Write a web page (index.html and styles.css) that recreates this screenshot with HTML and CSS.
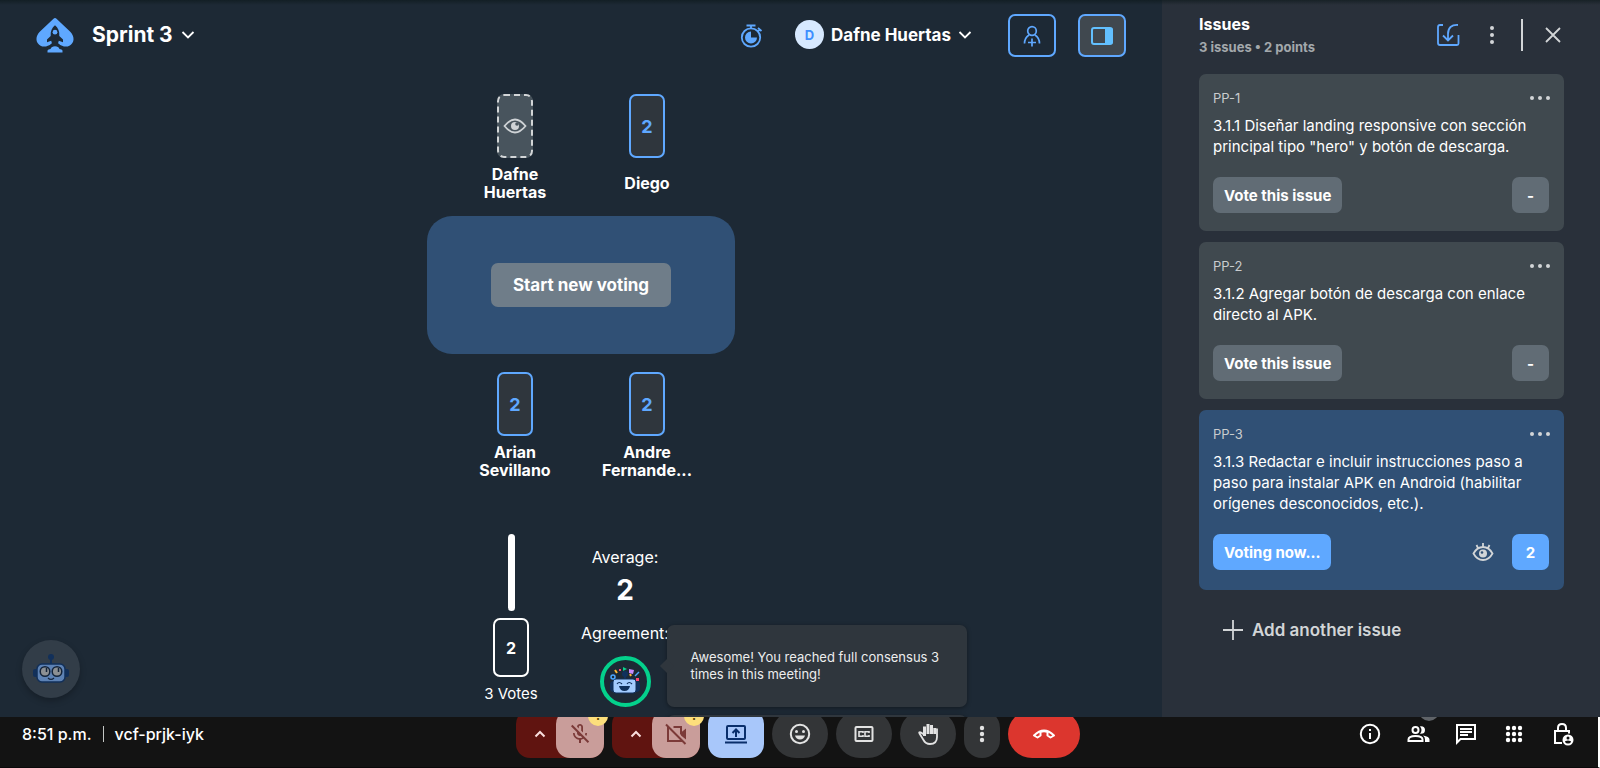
FILE: index.html
```
<!DOCTYPE html>
<html lang="en">
<head>
<meta charset="utf-8">
<meta name="viewport" content="width=device-width, initial-scale=1">
<title>Sprint 3</title>
<link rel="stylesheet" href="styles.css">
</head>
<body>
<div class="shell">
  <div class="app">
    <main class="board">
      <header class="topbar">
        <a class="logo" href="#" aria-label="Home">
          <svg width="38" height="36" viewBox="0 0 38 36"><path fill="#5fa8ff" d="M17.500.8Q19-.6 20.500.8L34 13.500C38 17.500 38.500 22 36 25.500 33.500 29.500 27 29.800 22.500 25.500H15.500C11 29.800 4.500 29.500 2 25.500-.5 22 0 17.500 4 13.500Z"/><path fill="#1d2935" d="M19 7.200C22 9.500 23.700 13 23.300 18L27 21.500V24.300L22.800 22.800 22 25.500 24.500 28.500H13.500L16 25.500 15.200 22.800 11 24.300V21.500L14.700 18C14.300 13 16 9.500 19 7.200Z"/><circle cx="19" cy="14.200" r="2.400" fill="#5fa8ff"/><path fill="#5fa8ff" d="M11.500 34.500V32.500Q12 31 14.500 31 15.500 28.300 19 28.300T23.500 31Q26 31 26.500 32.500V34.500Z"/></svg>
        </a>
        <button class="menu menu-title" type="button">Sprint 3
          <svg width="14" height="10" viewBox="0 0 14 10" class="line"><path d="M1.500 2 7 7.500 12.500 2"/></svg>
        </button>
        <div class="top-actions">
          <button class="icon-btn timer" type="button" aria-label="Timer">
            <svg width="24" height="24" viewBox="0 0 24 24" fill="none" stroke="#5fa8ff" stroke-width="1.800"><circle cx="12" cy="13.500" r="9.200"/><path d="M7.500 1.500h9M12 1.500V5M19 4l3.500 3M21 5.300l-2 2"/><path fill="#5fa8ff" stroke="none" d="M12 7.500a6 6 0 1 0 6 6h-6z"/></svg>
          </button>
          <button class="menu menu-user" type="button"><span class="avatar">D</span>Dafne Huertas
            <svg width="14" height="10" viewBox="0 0 14 10" class="line"><path d="M1.500 2 7 7.500 12.500 2"/></svg>
          </button>
          <button class="square" type="button" aria-label="Invite players">
            <svg width="20" height="22" viewBox="0 0 20 22" fill="none" stroke="#5fa8ff" stroke-width="1.700"><circle cx="10" cy="6" r="4.300"/><path d="M2.500 18.500c0-4 1.500-6.500 4.500-8.500M17.500 18.500c0-4-1.500-6.500-4.500-8.500M10 13.500v8M6 17.500h8"/></svg>
          </button>
          <button class="square square-on" type="button" aria-label="Toggle issues">
            <svg width="24" height="20" viewBox="0 0 24 20"><rect x="2" y="2" width="20" height="16" rx="2" fill="none" stroke="#62c0ff" stroke-width="2"/><path fill="#62c0ff" d="M15 2h6q2 0 2 2v12q0 2-2 2h-6z"/></svg>
          </button>
        </div>
      </header>

      <section class="players" aria-label="Players">
        <div class="player"><div class="card card-watch">
          <svg width="24" height="18" viewBox="0 0 24 18" fill="none" stroke="#cfd3d6" stroke-width="1.800"><path d="M1.500 9Q12-4 22.500 9 12 22 1.500 9z"/><circle cx="12" cy="9" r="4" fill="#cfd3d6" stroke="none"/><circle cx="14" cy="7" r="1.800" fill="#48545d" stroke="none"/></svg>
        </div><div class="name">Dafne<br>Huertas</div></div>
        <div class="player"><div class="card">2</div><div class="name">Diego</div></div>
      </section>
      <div class="table"><button class="start" type="button">Start new voting</button></div>
      <section class="players players-low" aria-label="Players">
        <div class="player"><div class="card">2</div><div class="name">Arian<br>Sevillano</div></div>
        <div class="player"><div class="card">2</div><div class="name">Andre<br>Fernande...</div></div>
      </section>

      <section class="results" aria-label="Results">
        <div class="tally">
          <div class="bar"></div>
          <div class="vote">2</div>
          <div class="votes">3 Votes</div>
        </div>
        <div class="summary">
          <div>Average:</div>
          <div class="average">2</div>
          <div>Agreement:</div>
          <div class="ring">
            <svg width="34" height="32" viewBox="0 0 34 32"><rect x="2" y="15" width="30" height="11" rx="4" fill="#10315d"/><circle cx="17" cy="8" r="3" fill="#10315d"/><path d="M17 8v6" stroke="#10315d" stroke-width="2"/><rect x="5" y="13" width="23" height="14" rx="3" fill="#a3ccff" stroke="#10315d"/><path fill="none" stroke="#10315d" stroke-width="1.200" d="M9 18q2-3 5 0M19 18q2-3 5 0"/><path fill="#10315d" d="M11 20h11q-1 5-5.500 5T11 20z"/><circle cx="5" cy="11" r="2" fill="none" stroke="#4ba6ff" stroke-width="1.500"/><path d="m7 4 2 3M23 10l-1-2" stroke="#ffb935" stroke-width="2"/><path fill="#0bd08c" d="m15 1 4 2-4 2z"/><path fill="#c98bff" d="m21 3 5 1-1 4-4-1z"/><path d="m27 10 4-4" stroke="#4ba6ff" stroke-width="1.500"/><path fill="#ff4772" d="M28 12h3v3h-3zM11 3h2v2h-2z"/></svg>
            <div class="tip tip-next"></div>
            <div class="tip" role="status">Awesome! You reached full consensus 3 times in this meeting!</div>
          </div>
        </div>
      </section>

      <button class="bot" type="button" aria-label="Assistant">
        <svg width="36" height="30" viewBox="0 0 36 30"><rect x="0" y="15" width="36" height="8" rx="2" fill="#12305a"/><circle cx="18" cy="3" r="3" fill="#12305a"/><path d="M18 3v8" stroke="#12305a" stroke-width="2"/><rect x="4" y="10" width="28" height="18" rx="5" fill="#5d82b4" stroke="#12305a" stroke-width="1.500"/><g fill="#8c9093" stroke="#14243a" stroke-width="1.500"><circle cx="12" cy="17.500" r="4.800"/><circle cx="24" cy="17.500" r="4.800"/></g><path d="M13.500 14v4M25.500 14v4" stroke="#14243a" stroke-width="1.500"/><path fill="none" stroke="#14243a" stroke-width="1.200" d="M15 24q3 3 6 0"/></svg>
      </button>
    </main>

    <aside class="issues">
      <header class="issues-head">
        <div><h2 class="issues-title">Issues</h2><p class="issues-sub">3 issues • 2 points</p></div>
        <div class="issues-tools">
          <button class="icon-btn" type="button" aria-label="Import">
            <svg width="24" height="24" viewBox="0 0 24 24" fill="none" stroke="#5fa8ff" stroke-width="1.800"><path d="M7 2H4Q2 2 2 4v16q0 2 2 2h17q1.500 0 1.500-1.500V12"/><path d="M22 2q-10-.5-10 9v6M7 12.500l5 5 5-5"/></svg>
          </button>
          <button class="icon-btn more" type="button" aria-label="More">
            <svg width="6" height="20" viewBox="0 0 6 20" fill="#d2d5d7"><circle cx="3" cy="3" r="2"/><circle cx="3" cy="10" r="2"/><circle cx="3" cy="17" r="2"/></svg>
          </button>
          <span class="rule"></span>
          <button class="icon-btn" type="button" aria-label="Close">
            <svg width="16" height="16" viewBox="0 0 16 16" stroke="#d2d5d7" stroke-width="1.800"><path d="m1 1 14 14M15 1 1 15"/></svg>
          </button>
        </div>
      </header>
      <article class="issue">
        <div class="issue-row"><span class="key">PP-1</span><button class="icon-btn" type="button" aria-label="PP-1 options"><svg width="22" height="6" viewBox="0 0 22 6" fill="#d2d5d7"><circle cx="3" cy="3" r="2"/><circle cx="11" cy="3" r="2"/><circle cx="19" cy="3" r="2"/></svg></button></div>
        <p class="issue-text">3.1.1 Diseñar landing responsive con sección principal tipo "hero" y botón de descarga.</p>
        <div class="issue-foot"><button class="btn" type="button">Vote this issue</button><button class="btn points" type="button">-</button></div>
      </article>
      <article class="issue">
        <div class="issue-row"><span class="key">PP-2</span><button class="icon-btn" type="button" aria-label="PP-2 options"><svg width="22" height="6" viewBox="0 0 22 6" fill="#d2d5d7"><circle cx="3" cy="3" r="2"/><circle cx="11" cy="3" r="2"/><circle cx="19" cy="3" r="2"/></svg></button></div>
        <p class="issue-text">3.1.2 Agregar botón de descarga con enlace directo al APK.</p>
        <div class="issue-foot"><button class="btn" type="button">Vote this issue</button><button class="btn points" type="button">-</button></div>
      </article>
      <article class="issue issue-active">
        <div class="issue-row"><span class="key">PP-3</span><button class="icon-btn" type="button" aria-label="PP-3 options"><svg width="22" height="6" viewBox="0 0 22 6" fill="#d2d5d7"><circle cx="3" cy="3" r="2"/><circle cx="11" cy="3" r="2"/><circle cx="19" cy="3" r="2"/></svg></button></div>
        <p class="issue-text">3.1.3 Redactar e incluir instrucciones paso a paso para instalar APK en Android (habilitar orígenes desconocidos, etc.).</p>
        <div class="issue-foot"><button class="btn" type="button">Voting now...</button>
          <button class="icon-btn reveal" type="button" aria-label="Reveal votes"><svg width="22" height="20" viewBox="0 0 22 20" fill="none" stroke="#d2d5d7" stroke-width="1.800"><path d="M1.500 11.500Q5 5 11 5T20.500 11.500Q17 18 11 18T1.500 11.500zM11 5V1M6 6 4.500 3M16 6l1.500-3"/><circle cx="11" cy="11.500" r="4" fill="#d2d5d7" stroke="none"/><circle cx="10" cy="10.500" r="1.300" fill="#305075" stroke="none"/></svg></button>
          <button class="btn points" type="button">2</button></div>
      </article>
      <button class="add" type="button"><svg width="20" height="20" viewBox="0 0 20 20" stroke="#d2d5d7" stroke-width="1.800"><path d="M10 0v20M0 10h20"/></svg>Add another issue</button>
    </aside>
  </div>

  <footer class="call">
    <div class="meeting"><span>8:51 p.m.</span><span class="meeting-rule"></span><span>vcf-prjk-iyk</span></div>
    <div class="controls">
      <div class="split">
        <button class="caret" type="button" aria-label="Audio settings"><svg width="12" height="8" viewBox="0 0 12 8" fill="none" stroke="#f9dedc" stroke-width="2"><path d="m1.500 6.500 4.500-4.500 4.500 4.500"/></svg></button>
        <button class="muted" type="button" aria-label="Turn on microphone"><svg width="24" height="24" viewBox="0 0 24 24" fill="#7b3a38"><path d="M10.800 4.900c0-.66.54-1.200 1.200-1.200s1.200.54 1.200 1.200l-.01 3.910L15 10.600V5c0-1.660-1.340-3-3-3-1.540 0-2.790 1.160-2.960 2.650l1.760 1.760zM19 11h-1.700c0 .58-.1 1.130-.27 1.640l1.270 1.270c.44-.88.7-1.870.7-2.910M4.410 2.860 3 4.270l6 6V11c0 1.660 1.340 3 3 3 .23 0 .44-.03.65-.08l1.660 1.660c-.71.33-1.500.52-2.310.52-2.760 0-5.300-2.100-5.300-5.100H5c0 3.410 2.720 6.230 6 6.720V21h2v-3.280c.91-.13 1.770-.45 2.550-.9l4.200 4.200 1.410-1.410z"/></svg><span class="warn">!</span></button>
      </div>
      <div class="split">
        <button class="caret" type="button" aria-label="Video settings"><svg width="12" height="8" viewBox="0 0 12 8" fill="none" stroke="#f9dedc" stroke-width="2"><path d="m1.500 6.500 4.500-4.500 4.500 4.500"/></svg></button>
        <button class="muted" type="button" aria-label="Turn on camera"><svg width="24" height="24" viewBox="0 0 24 24" fill="none" stroke="#7b3a38" stroke-width="2"><path d="M4 5v14h13v-2M9.500 5H17v7.500M2 2.500l19.500 19.500"/><path fill="#7b3a38" stroke="none" d="m17 10.500 5-4v11l-5-4z"/></svg><span class="warn">!</span></button>
      </div>
      <button class="ctl ctl-present" type="button" aria-label="Present now"><svg width="24" height="24" viewBox="0 0 24 24" fill="none" stroke="#0a2f6b" stroke-width="2"><rect x="3" y="4" width="18" height="13" rx="1"/><path d="M1 20.500h22M12 15V8.500M8.500 11 12 7.500l3.500 3.500"/></svg></button>
      <button class="ctl" type="button" aria-label="Send a reaction"><svg width="24" height="24" viewBox="0 0 24 24" fill="none" stroke="#e3e3e3" stroke-width="2"><circle cx="12" cy="12" r="9.200"/><path fill="#e3e3e3" stroke="none" d="M7 13.500h10q-1.200 4-5 4t-5-4z"/><circle cx="8.500" cy="9.500" r="1.500" fill="#e3e3e3" stroke="none"/><circle cx="15.500" cy="9.500" r="1.500" fill="#e3e3e3" stroke="none"/></svg></button>
      <button class="ctl" type="button" aria-label="Captions"><svg width="24" height="24" viewBox="0 0 24 24" fill="none" stroke="#e3e3e3"><rect x="3.500" y="5" width="17" height="14" rx="1" stroke-width="2"/><path stroke-width="1.600" d="M11 11V9.800H7v4.400h4V13M17 11V9.800h-4v4.400h4V13"/></svg></button>
      <button class="ctl" type="button" aria-label="Raise hand"><svg width="24" height="24" viewBox="0 0 24 24" fill="none" stroke="#e3e3e3" stroke-width="1.800" stroke-linejoin="round"><path d="M21 6.500V15q0 7-7 7-4.500 0-6.500-4L3.500 11.500Q2.500 10 4.500 10.300L8 12.500"/><path stroke-width="3" d="M8.500 14V4.500M12 12V2M15.500 12V3M18.800 12V6"/></svg></button>
      <button class="ctl ctl-more" type="button" aria-label="More options"><svg width="6" height="20" viewBox="0 0 6 20" fill="#e3e3e3"><circle cx="3" cy="4" r="2.200"/><circle cx="3" cy="10" r="2.200"/><circle cx="3" cy="16" r="2.200"/></svg></button>
      <button class="ctl ctl-end" type="button" aria-label="Leave call"><svg width="24" height="12" viewBox="0 0 24 12" fill="none" stroke="#fff" stroke-width="2"><path stroke-linejoin="round" d="M5.500 9.500 2 7.500Q7 2.500 12 2.500t10 5l-3.500 2-3-2V4Q12 2.500 8.500 4v3.500z"/></svg></button>
    </div>
    <div class="tools">
      <button class="tool" type="button" aria-label="Meeting details"><svg width="24" height="24" viewBox="0 0 24 24" fill="none" stroke="#fff" stroke-width="2"><circle cx="12" cy="12" r="9.200"/><path d="M12 11v6M12 7v2"/></svg></button>
      <button class="tool" type="button" aria-label="People"><svg width="24" height="24" viewBox="0 0 24 24" fill="none" stroke="#fff" stroke-width="2"><circle cx="9.500" cy="8" r="3"/><path d="M2.500 19v-1.500q0-3.500 7-3.500t7 3.500V19z"/><path fill="#fff" stroke="none" d="M14 4.200q5-.5 5 3.800t-5 3.800q3-3.800 0-7.600zM17 13.500q6.500 1 6.500 4V20H19v-2.500q0-2.300-2-4z"/></svg><span class="count"></span></button>
      <button class="tool" type="button" aria-label="Chat"><svg width="24" height="24" viewBox="0 0 24 24" fill="none" stroke="#fff" stroke-width="2"><path d="M3 20.500V3h18v14H6.500z"/><path d="M6 7h12M6 10h12M6 13h8"/></svg></button>
      <button class="tool" type="button" aria-label="Activities"><svg width="24" height="24" viewBox="0 0 24 24" fill="#fff"><circle cx="6" cy="6" r="2.200"/><circle cx="12" cy="6" r="2.200"/><circle cx="18" cy="6" r="2.200"/><circle cx="6" cy="12" r="2.200"/><circle cx="12" cy="12" r="2.200"/><circle cx="18" cy="12" r="2.200"/><circle cx="6" cy="18" r="2.200"/><circle cx="12" cy="18" r="2.200"/><circle cx="18" cy="18" r="2.200"/></svg></button>
      <button class="tool" type="button" aria-label="Host controls"><svg width="24" height="24" viewBox="0 0 24 24" fill="none" stroke="#fff" stroke-width="2"><path d="M12 21H5V9h14v2.500M8 9V6q0-4 4-4t4 4v3"/><circle cx="18" cy="18" r="5.500" fill="#fff" stroke="none"/><circle cx="18" cy="16" r="1.500" fill="#131313" stroke="none"/><path fill="#131313" stroke="none" d="M15 20q0-1.500 3-1.500t3 1.500q-1 1.500-3 1.500T15 20z"/></svg></button>
    </div>
  </footer>
</div>
</body>
</html>
```

FILE: styles.css
```
* { box-sizing: border-box; }
body { margin: 0; font-family: Inter, "Liberation Sans", sans-serif; color: #fff; background: #131313; }
button { margin: 0; padding: 0; border: 0; background: none; color: inherit; font: inherit; cursor: pointer; }
svg { display: block; flex: none; }
h2, p { margin: 0; }

.shell { display: flex; flex-direction: column; height: 100vh; }
.app { position: relative; display: flex; flex: 1; min-height: 0; overflow: hidden; }
.app::before { content: ""; position: absolute; z-index: 1; inset: 0 0 auto; height: 5px; background: linear-gradient(rgba(12, 24, 26, .6), transparent); }
.board { position: relative; display: flex; flex-direction: column; align-items: center; flex: 1; background: #1d2935; }

.topbar { display: flex; align-items: center; align-self: stretch; padding: 14px 36px 0; }
.menu { display: flex; align-items: center; padding-bottom: 2px; font-weight: 700; }
.line { fill: none; stroke: #fff; stroke-width: 1.8; }
.menu-title { gap: 8px; margin-left: 18px; font-size: 21px; }
.menu-user { gap: 7px; margin: 0 36px 0 32px; font-size: 17px; }
.avatar { display: grid; place-items: center; width: 29px; height: 29px; border-radius: 50%; background: #d7e9ff; color: #3e8fff; font-size: 13px; }
.top-actions { display: flex; align-items: center; margin-left: auto; }
.square { display: grid; place-items: center; width: 48px; height: 43px; border: 2px solid #5fa8ff; border-radius: 7px; }
.square-on { margin-left: 22px; background: #40484f; }

.players { display: flex; margin-top: 37px; }
.players-low { margin-top: 18px; }
.player { display: flex; flex-direction: column; align-items: center; gap: 7px; width: 132px; }
.card { display: grid; place-items: center; width: 36px; height: 64px; border: 2px solid #5fa8ff; border-radius: 7px; background: #2f363d; color: #5fa8ff; font-size: 18px; font-weight: 700; }
.card-watch { border: 2px dashed #d2d5d7; background: #48545d; }
.name { display: grid; place-items: center; min-height: 36px; font-size: 16px; line-height: 18px; font-weight: 700; text-align: center; }
.table { display: grid; place-items: center; width: 308px; height: 138px; margin-top: 15px; border-radius: 25px; background: #305075; }
.start { height: 44px; padding: 0 22px; border-radius: 7px; background: #6f7d89; font-size: 17px; font-weight: 700; }

.results { display: flex; gap: 36px; margin-top: 55px; }
.tally { display: flex; flex-direction: column; align-items: center; gap: 7px; width: 52px; }
.bar { width: 7px; height: 77px; border-radius: 4px; background: #fff; }
.vote { display: grid; place-items: center; width: 36px; height: 59px; border: 2px solid #fff; border-radius: 7px; font-size: 16px; font-weight: 700; }
.votes { font-size: 15px; line-height: 20px; white-space: nowrap; }
.summary { display: flex; flex-direction: column; align-items: center; width: 104px; padding-top: 13px; font-size: 16px; line-height: 20px; }
.average { margin: 5px 0 15px; font-size: 28px; line-height: 36px; font-weight: 700; }
.ring { position: relative; display: grid; place-items: center; width: 51px; height: 51px; margin-top: 13px; border: 4px solid #04d18c; border-radius: 50%; }
.tip { position: absolute; top: -35px; left: 63px; width: 300px; padding: 24px; border-radius: 7px; background: #2f363d; box-shadow: 0 1px 4px rgba(0, 0, 0, .4); color: #eceded; font-size: 13px; line-height: 17px; }
.tip::before { content: ""; position: absolute; top: 36px; left: -5px; width: 10px; height: 10px; background: #2f363d; transform: rotate(45deg); }
.tip-next { top: 55px; }
.bot { position: absolute; left: 22px; bottom: 19px; display: grid; place-items: center; width: 58px; height: 58px; border-radius: 50%; background: #323d48; box-shadow: 0 3px 6px rgba(0, 0, 0, .25); }

.issues { display: flex; flex-direction: column; gap: 11px; width: 438px; padding: 13px 36px 0 37px; background: #29303a; }
.issues-head { display: flex; justify-content: space-between; height: 50px; }
.issues-title { font-size: 16px; line-height: 22px; font-weight: 700; }
.issues-sub { margin-top: 2px; color: #a3a8ac; font-size: 13px; line-height: 20px; font-weight: 700; }
.issues-tools { display: flex; align-items: center; height: 44px; padding-right: 3px; }
.more { margin: 0 26px 0 29px; }
.rule { width: 2px; height: 32px; margin-right: 22px; background: #d2d5d7; }
.issue { padding: 14px 15px 18px 14px; border-radius: 7px; background: #40494f; }
.issue-active { padding-bottom: 20px; background: #305075; }
.issue-row { display: flex; align-items: center; justify-content: space-between; height: 20px; margin-right: -2px; }
.key { color: #c9ccce; font-size: 13px; }
.issue-text { margin: 7px 0 20px; font-size: 15px; line-height: 21px; }
.issue-foot { display: flex; justify-content: space-between; }
.btn { height: 36px; padding: 0 11px; border-radius: 7px; background: #616c75; font-size: 15px; font-weight: 700; }
.issue-active .btn { background: #5fa8ff; }
.points { width: 37px; }
.reveal { margin: 0 18px 0 auto; }
.add { display: flex; align-items: center; gap: 9px; align-self: flex-start; margin: 18px 0 0 24px; color: #d2d5d7; font-size: 17px; line-height: 22px; font-weight: 600; }

.call { display: grid; grid-template: 41px / 1fr auto 1fr; align-items: end; padding: 0 12px 9px 10px; border-right: 2px solid #fff; border-bottom: 1px solid #0a090a; overflow: hidden; background: #131313; }
.meeting { display: flex; align-items: center; height: 48px; padding-left: 12px; font-size: 16px; font-weight: 500; }
.meeting-rule { width: 1px; height: 16px; margin: 0 11px; background: #c4c7c5; }
.controls { display: flex; gap: 8px; }
.split { display: flex; width: 88px; height: 48px; border-radius: 14px; background: #601410; }
.caret { display: grid; place-items: center; width: 48px; margin-right: -8px; }
.muted { position: relative; display: grid; place-items: center; width: 48px; border-radius: 14px; background: #c99d9a; }
.warn { position: absolute; top: -4px; right: -4px; width: 20px; height: 20px; border-radius: 50%; background: #fddf7c; color: #5c4300; font-size: 12px; line-height: 20px; font-weight: 700; }
.ctl { display: grid; place-items: center; width: 56px; height: 48px; border-radius: 24px; background: #333537; }
.ctl-present { border-radius: 14px; background: #a8c7fa; }
.ctl-more { width: 36px; border-radius: 18px; }
.ctl-end { width: 72px; background: #dc362e; }
.tools { display: flex; justify-content: flex-end; }
.tool { position: relative; display: grid; place-items: center; width: 48px; height: 48px; }
.count { position: absolute; top: -9px; right: 3px; width: 20px; height: 20px; border-radius: 50%; background: #5f6368; }
```
